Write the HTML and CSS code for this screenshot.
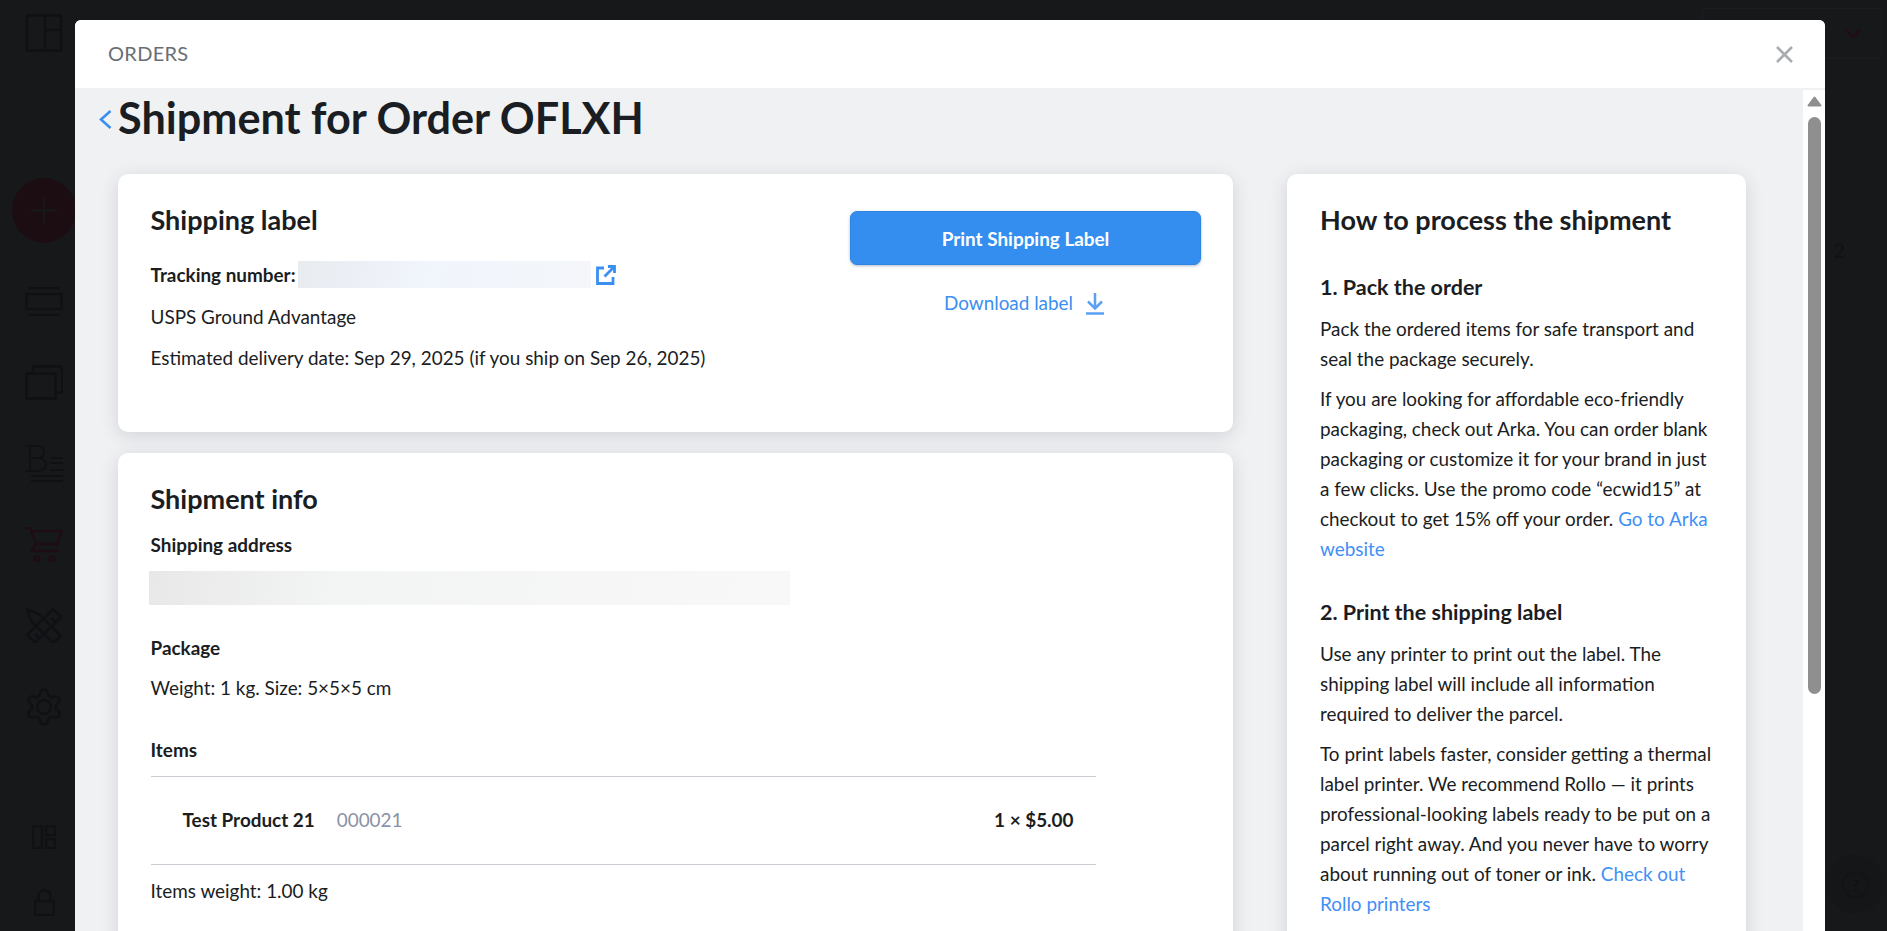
FILE: index.html
```html
<!DOCTYPE html>
<html lang="en">
<head>
<meta charset="utf-8">
<title>Shipment for Order OFLXH</title>
<link rel="stylesheet" href="styles.css">
</head>
<body>
<div class="app">
  <nav class="rail">
    <svg class="ic ic-layout" viewBox="0 0 39 40"><path d="M2 2h35v36H2zM20.500 2v36M20.500 17H37"/></svg>
    <div class="plus"><svg viewBox="0 0 26 27"><path d="M13 0v27M0 13.500h26"/></svg></div>
    <svg class="ic ic-screen" viewBox="0 0 38 29"><path d="M3 1h32M1.500 7h35v15h-35zM3 28h32"/></svg>
    <svg class="ic ic-copy" viewBox="0 0 38 35"><path d="M1.500 8.500h29v25h-29zM8 7V1.500h29v26h-6"/></svg>
    <svg class="ic ic-store" viewBox="0 0 38 37"><path d="M0 1h11q8 0 8 6.500T11 13q10 0 10 6.500T11 26H0M5 1v25M5 13h6M25 13h13M25 18h13M25 25h13M6 31h32M6 36h32"/></svg>
    <svg class="ic ic-cart" viewBox="0 0 38 35"><path d="M0 1h5l6 15-4 8h27M6 4h31l-5 13H11"/><circle cx="12" cy="32" r="2.500"/><circle cx="27" cy="32" r="2.500"/></svg>
    <svg class="ic ic-tools" viewBox="0 0 36 35"><path d="M1 1l12 5 22 22-8 7L5 13zM27 1l8 8-26 26-8-8zM25 10l4 4M9 26l4 4"/></svg>
    <svg class="ic ic-gear" viewBox="1 1 22 22"><path d="M12.220 2h-.44a2 2 0 0 0-2 2v.18a2 2 0 0 1-1 1.730l-.43.25a2 2 0 0 1-2 0l-.15-.08a2 2 0 0 0-2.730.73l-.22.38a2 2 0 0 0 .73 2.730l.15.1a2 2 0 0 1 1 1.720v.51a2 2 0 0 1-1 1.740l-.15.09a2 2 0 0 0-.73 2.730l.22.38a2 2 0 0 0 2.730.73l.15-.08a2 2 0 0 1 2 0l.43.25a2 2 0 0 1 1 1.730V20a2 2 0 0 0 2 2h.44a2 2 0 0 0 2-2v-.18a2 2 0 0 1 1-1.730l.43-.25a2 2 0 0 1 2 0l.15.08a2 2 0 0 0 2.730-.73l.22-.39a2 2 0 0 0-.73-2.730l-.15-.08a2 2 0 0 1-1-1.740v-.5a2 2 0 0 1 1-1.740l.15-.09a2 2 0 0 0 .73-2.730l-.22-.38a2 2 0 0 0-2.730-.73l-.15.08a2 2 0 0 1-2 0l-.43-.25a2 2 0 0 1-1-1.730V4a2 2 0 0 0-2-2z"/><circle cx="12" cy="12" r="4"/></svg>
    <div class="rail-end">
      <svg class="ic ic-apps" viewBox="0 0 24 24"><path d="M1 1h9v22H1zM14 1h9v9h-9zM14 14h9v9h-9z"/></svg>
      <svg class="ic ic-lock" viewBox="0 0 21 27"><path d="M1 12h19v14H1zM4.500 12V8q0-6.500 6-6.500t6 6.500v4"/></svg>
    </div>
  </nav>
  <main class="backdrop-page">
    <div class="store-select"><svg viewBox="0 0 16 10"><path d="M1 1l7 7 7-7"/></svg></div>
    <div class="page-num">2</div>
    <div class="help"><span>?</span></div>
  </main>
</div>

<div class="modal">
  <header class="modal-head">
    <span class="modal-name">ORDERS</span>
    <svg class="close" viewBox="0 0 17 17"><path d="M1 1l15 15M16 1L1 16"/></svg>
  </header>
  <div class="modal-main">
    <div class="modal-scroll">
      <div class="title-row">
        <svg class="back" viewBox="0 0 13 19"><path d="M11.500 1L2 9.500l9.500 8.500"/></svg>
        <h1>Shipment for Order OFLXH</h1>
      </div>
      <div class="columns">
        <div class="col-left">
          <section class="card label-card">
            <div class="label-info">
              <h2>Shipping label</h2>
              <div class="tracking">
                <b>Tracking number:</b><span class="redact-track"></span>
                <svg class="ext" viewBox="0 0 20 20"><path d="M8 3H1.500v15.500H17V12M12 1.500h6.500V8M18 2L8.500 11.500"/></svg>
              </div>
              <p class="meta">USPS Ground Advantage</p>
              <p class="meta">Estimated delivery date: Sep 29, 2025 (if you ship on Sep 26, 2025)</p>
            </div>
            <div class="label-actions">
              <button class="print">Print Shipping Label</button>
              <a class="download">Download label
                <svg viewBox="0 0 20 23"><path d="M10 1v15M3 9.500l7 7 7-7M1 21.500h18"/></svg>
              </a>
            </div>
          </section>
          <section class="card info-card">
            <h2>Shipment info</h2>
            <h3 class="addr-h">Shipping address</h3>
            <div class="redact-addr"></div>
            <h3 class="pkg-h">Package</h3>
            <p class="pkg">Weight: 1 kg. Size: 5×5×5 cm</p>
            <h3 class="items-h">Items</h3>
            <div class="item">
              <b>Test Product 21</b><span class="sku">000021</span><b class="price">1 × $5.00</b>
            </div>
            <p class="weight">Items weight: 1.00 kg</p>
          </section>
        </div>
        <aside class="card howto">
          <h2>How to process the shipment</h2>
          <h4 class="first">1. Pack the order</h4>
          <p>Pack the ordered items for safe transport and seal the package securely.</p>
          <p>If you are looking for affordable eco-friendly packaging, check out Arka. You can order blank packaging or customize it for your brand in just a few clicks. Use the promo code “ecwid15” at checkout to get 15% off your order. <a>Go to Arka website</a></p>
          <h4>2. Print the shipping label</h4>
          <p>Use any printer to print out the label. The shipping label will include all information required to deliver the parcel.</p>
          <p>To print labels faster, consider getting a thermal label printer. We recommend Rollo — it prints professional-looking labels ready to be put on a parcel right away. And you never have to worry about running out of toner or ink. <a>Check out Rollo printers</a></p>
        </aside>
      </div>
    </div>
    <div class="scrollbar">
      <svg class="arrow" viewBox="0 0 15 11"><path d="M7.500 1.500L1.500 9.500h12z"/></svg>
      <span class="thumb"></span>
    </div>
  </div>
</div>
</body>
</html>
```

FILE: styles.css
```css
* { box-sizing: border-box; }
html, body { margin: 0; height: 100%; overflow: hidden; }
body { background: #16181a; font-family: Lato, "Open Sans", sans-serif; color: #1a1d22; font-size: 18.900px; }
.app { display: flex; height: 931px; }
.rail { width: 88px; display: flex; flex-direction: column; align-items: center; padding-top: 13px; flex: none; }
.ic { fill: none; stroke: #101114; stroke-width: 2.500; display: block; width: 38px; flex: none; }
.ic-layout { height: 40px; }
.plus { width: 64px; height: 65px; border-radius: 50%; background: #1c0d12; margin-top: 125px; display: flex; align-items: center; justify-content: center; flex: none; }
.plus svg { width: 26px; height: 27px; fill: none; stroke: #16181a; stroke-width: 2; }
.ic-screen { height: 29px; margin-top: 44px; }
.ic-copy { height: 35px; margin-top: 49px; }
.ic-store { height: 37px; margin-top: 45px; stroke-width: 2; }
.ic-cart { height: 35px; margin-top: 45px; stroke: #1e0e14; }
.ic-tools { width: 36px; height: 35px; margin-top: 46px; }
.ic-gear { width: 38px; height: 38px; margin-top: 45px; stroke-width: 1.500; }
.rail-end { margin-top: auto; padding-bottom: 15px; display: flex; flex-direction: column; align-items: center; gap: 40px; }
.ic-apps { width: 24px; height: 24px; }
.ic-lock { width: 21px; height: 27px; }
.backdrop-page { flex: 1; position: relative; }
.store-select { position: absolute; right: 5px; top: 8px; width: 180px; height: 51px; border: 1px solid #1b1d20; border-radius: 3px; display: flex; align-items: center; justify-content: flex-end; padding-right: 20px; }
.store-select svg { width: 16px; height: 10px; fill: none; stroke: #1f0e13; stroke-width: 2.500; }
.page-num { position: absolute; right: 42px; top: 238px; font: 22px "Liberation Serif", serif; color: #0f1012; }
.help { position: absolute; right: 3px; top: 855px; width: 57px; height: 58px; border-radius: 50%; background: #141618; display: flex; align-items: center; justify-content: center; color: #101114; }
.help span { width: 27px; height: 27px; border: 2px solid #121416; border-radius: 50%; text-align: center; font-size: 16px; line-height: 23px; }

.modal { position: fixed; left: 75px; right: 62px; top: 20px; bottom: 0; display: flex; flex-direction: column; background: #f0f1f3; border-radius: 6px 6px 0 0; overflow: hidden; }
.modal-head { height: 68px; background: #fff; flex: none; display: flex; align-items: center; justify-content: space-between; padding: 0 32px 2px 33px; }
.modal-name { font-size: 20px; letter-spacing: .3px; color: #6a6e74; }
.close { width: 17px; height: 17px; fill: none; stroke: #a8abb0; stroke-width: 2.600; margin-top: 2px; }
.modal-main { flex: 1; display: flex; min-height: 0; }
.modal-scroll { flex: 1; overflow: hidden; min-width: 0; }
.title-row { display: flex; align-items: center; padding-left: 24px; height: 50px; margin-top: 4px; }
.back { width: 13px; height: 19px; margin-right: 6px; fill: none; stroke: #3a8ff0; stroke-width: 2.600; margin-top: 4px; flex: none; }
h1 { margin: 0; font-size: 43.200px; font-weight: 700; line-height: 50px; }
.columns { display: flex; gap: 54px; padding: 32px 57px 0 43px; align-items: flex-start; }
.col-left { width: 1115px; flex: none; display: flex; flex-direction: column; gap: 21px; }
.card { background: #fff; border-radius: 10px; box-shadow: 0 4px 18px rgba(40, 45, 60, .15); }
h2 { margin: 0; font-size: 27px; font-weight: 700; line-height: 32px; }
h3 { margin: 0; font-size: 18.900px; font-weight: 700; line-height: 24px; }
p { margin: 0; }
b { font-weight: 700; }
.label-card { height: 258px; display: flex; justify-content: space-between; padding: 30px 32px 0 32.500px; }
.tracking { display: flex; align-items: center; margin-top: 25px; height: 27px; }
.redact-track { width: 293px; height: 27px; margin-left: 2px; background: linear-gradient(100deg, #e8ebf0, #f1f5fc 45%, #f4f6fa); }
.ext { width: 20px; height: 20px; margin-left: 5px; fill: none; stroke: #3a8ff0; stroke-width: 2.800; }
.meta { line-height: 24px; margin-top: 17px; }
.label-actions { width: 351px; display: flex; flex-direction: column; align-items: center; margin-top: 7px; }
.print { width: 100%; height: 54px; border: 1px solid #2f85e2; border-radius: 7px; background: #348ef0; color: #fff; font: 700 18.900px Lato, sans-serif; box-shadow: 0 1px 3px rgba(30, 60, 110, .35); }
.download { display: flex; align-items: center; gap: 12px; margin-top: 26px; padding-right: 2px; color: #3a8ff0; font-size: 18.900px; line-height: 24px; height: 24px; }
.download svg { width: 20px; height: 23px; fill: none; stroke: #5aa0f3; stroke-width: 2.500; }
.info-card { padding: 30px 33px 60px 32.500px; height: 600px; }
.addr-h { margin-top: 18px; }
.redact-addr { width: 641px; height: 34px; margin: 14px 0 0 -2px; background: linear-gradient(100deg, #e8e8e8, #f3f4f4 30%, #f8f8f8); }
.pkg-h { margin-top: 31px; }
.pkg { line-height: 24px; margin-top: 16px; }
.items-h { margin-top: 38px; }
.item { width: 945px; margin-top: 14px; height: 89px; border-top: 1px solid #c9ccd3; border-bottom: 1px solid #c9ccd3; display: flex; align-items: center; padding: 0 22px 2px 32px; }
.sku { margin-left: 22px; color: #8a92a5; }
.price { margin-left: auto; }
.weight { line-height: 24px; margin-top: 14px; }
.howto { width: 459px; flex: none; padding: 30px 33px 40px 33px; height: 800px; }
.howto h4 { margin: 33px 0 12px; font-size: 21.500px; font-weight: 700; line-height: 30px; }
.howto h4.first { margin-top: 36px; }
.howto p { line-height: 30px; margin-bottom: 10px; }
.howto a { color: #3f8ff7; }
.scrollbar { width: 22px; flex: none; background: #fff; margin-top: 2px; display: flex; flex-direction: column; align-items: center; }
.arrow { width: 15px; height: 11px; margin-top: 6px; fill: #8f8f8f; stroke: #8f8f8f; stroke-width: 2; stroke-linejoin: round; flex: none; }
.thumb { width: 13px; height: 577px; margin-top: 10px; background: #8f8f8f; border-radius: 7px; flex: none; }
```
